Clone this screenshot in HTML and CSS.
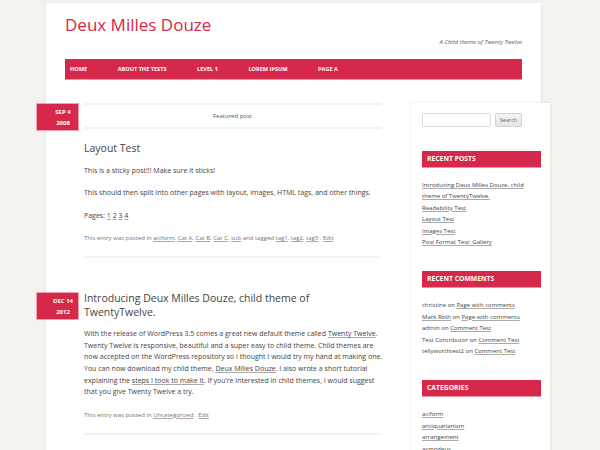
FILE: index.html
```html
<!DOCTYPE html>
<html lang="en">
<head>
<meta charset="utf-8">
<title>Deux Milles Douze</title>
<link rel="stylesheet" href="styles.css">
</head>
<body>
<div class="page">
  <header class="site-header">
    <h1 class="site-title">Deux Milles Douze</h1>
    <p class="site-desc">A Child theme of Twenty Twelve</p>
    <nav class="main-nav">
      <ul>
        <li>Home</li>
        <li>About The Tests</li>
        <li>Level 1</li>
        <li>Lorem Ipsum</li>
        <li>Page A</li>
      </ul>
    </nav>
  </header>
  <div class="site-main">
    <main class="content">
      <article class="post">
        <div class="date-badge"><span>Sep 4</span><span>2008</span></div>
        <div class="featured">Featured post</div>
        <h2 class="entry-title">Layout Test</h2>
        <div class="entry-content">
          <p>This is a sticky post!!! Make sure it sticks!</p>
          <p>This should then split into other pages with layout, images, HTML tags, and other things.</p>
          <p>Pages: <a href="#">1</a> <a href="#">2</a> <a href="#">3</a> <a href="#">4</a></p>
        </div>
        <footer class="entry-meta">This entry was posted in <a href="#">aciform</a>, <a href="#">Cat A</a>, <a href="#">Cat B</a>, <a href="#">Cat C</a>, <a href="#">sub</a> and tagged <a href="#">tag1</a>, <a href="#">tag2</a>, <a href="#">tag3</a> . <a href="#">Edit</a></footer>
      </article>
      <article class="post">
        <div class="date-badge"><span>Dec 14</span><span>2012</span></div>
        <h2 class="entry-title first">Introducing Deux Milles Douze, child theme of TwentyTwelve.</h2>
        <div class="entry-content">
          <p>With the release of WordPress 3.5 comes a great new default theme called <a href="#">Twenty Twelve</a>. Twenty Twelve is responsive, beautiful and a super easy to child theme. Child themes are now accepted on the WordPress repository so I thought I would try my hand at making one. You can now download my child theme, <a href="#">Deux Milles Douze</a>. I also wrote a short tutorial explaining the <a href="#">steps I took to make it</a>. If you’re interested in child themes, I would suggest that you give Twenty Twelve a try.</p>
        </div>
        <footer class="entry-meta">This entry was posted in <a href="#">Uncategorized</a> . <a href="#">Edit</a></footer>
      </article>
    </main>
    <aside class="sidebar">
      <form class="search">
        <input type="text" class="search-input">
        <button type="button" class="search-btn">Search</button>
      </form>
      <section class="widget">
        <h3 class="widget-title">Recent Posts</h3>
        <ul class="widget-list">
          <li><a href="#">Introducing Deux Milles Douze, child theme of TwentyTwelve.</a></li>
          <li><a href="#">Readability Test</a></li>
          <li><a href="#">Layout Test</a></li>
          <li><a href="#">Images Test</a></li>
          <li><a href="#">Post Format Test: Gallery</a></li>
        </ul>
      </section>
      <section class="widget">
        <h3 class="widget-title">Recent Comments</h3>
        <ul class="widget-list">
          <li>christine on <a href="#">Page with comments</a></li>
          <li><a href="#">Mark Roth</a> on <a href="#">Page with comments</a></li>
          <li>admin on <a href="#">Comment Test</a></li>
          <li>Test Contributor on <a href="#">Comment Test</a></li>
          <li>tellyworthtest2 on <a href="#">Comment Test</a></li>
        </ul>
      </section>
      <section class="widget">
        <h3 class="widget-title">Categories</h3>
        <ul class="widget-list">
          <li><a href="#">aciform</a></li>
          <li><a href="#">antiquarianism</a></li>
          <li><a href="#">arrangement</a></li>
          <li><a href="#">asmodeus</a></li>
        </ul>
      </section>
    </aside>
  </div>
</div>
</body>
</html>
```
FILE: styles.css
```css
html, body {
  margin: 0;
  height: 450px;
  overflow: hidden;
}
body {
  background: #f3f2ee;
  font-family: "Open Sans", "DejaVu Sans", sans-serif;
  color: #444;
}
a {
  color: #444;
  text-decoration: underline;
  text-decoration-color: #aaa;
}
.page {
  width: 495px;
  min-height: 470px;
  margin: 3px 0 0 46px;
  background: #fff;
  box-shadow: 0 1px 3px rgba(0, 0, 0, 0.08);
}
.site-header {
  padding: 10px 19px 0;
}
.site-title {
  margin: 0;
  font-size: 17px;
  line-height: 24px;
  font-weight: 400;
  color: #d6284a;
}
.site-desc {
  margin: 0;
  font-size: 6px;
  line-height: 10px;
  font-style: italic;
  text-align: right;
  color: #5e5e5e;
}
.main-nav {
  margin-top: 12px;
  height: 21px;
  box-sizing: border-box;
  background: #d6284a;
  border-bottom: 1px solid #ee93a5;
}
.main-nav ul {
  list-style: none;
  margin: 0;
  padding: 0 0 0 5px;
  height: 100%;
  display: flex;
  align-items: center;
  gap: 30.5px;
}
.main-nav li {
  font-size: 5.6px;
  font-weight: 700;
  color: #fff;
  text-transform: uppercase;
}
.site-main {
  display: flex;
  align-items: flex-start;
  margin-top: 23px;
}
.content {
  flex-shrink: 0;
  width: 303px;
  margin-left: 38px;
}
.post {
  position: relative;
}
.post + .post {
  margin-top: 34px;
}
.date-badge {
  position: absolute;
  left: -48px;
  top: 0;
  width: 43px;
  height: 28px;
  box-sizing: border-box;
  padding: 3px 0 0 11px;
  background: #d6284a;
  border: 1px solid #f0a2b1;
  display: flex;
  flex-direction: column;
  align-items: center;
  color: #fff;
  font-size: 6px;
  font-weight: 700;
  line-height: 10.6px;
  text-transform: uppercase;
}
.featured {
  width: 297px;
  height: 26px;
  box-sizing: border-box;
  border-top: 2px solid #f3f3f3;
  border-bottom: 2px solid #f3f3f3;
  text-align: center;
  font-size: 6px;
  line-height: 22px;
  color: #555;
}
.entry-title {
  max-width: 290px;
  margin: 13px 0 9px;
  font-size: 10.5px;
  line-height: 13.5px;
  font-weight: 400;
  color: #444;
}
.entry-title.first {
  margin-top: 0;
}
.entry-content p {
  margin: 0 0 11px;
  font-size: 7px;
  line-height: 11.6px;
}
.entry-meta {
  width: 297px;
  padding-bottom: 11px;
  border-bottom: 2px solid #f3f3f3;
  font-size: 6px;
  line-height: 13px;
  color: #757575;
}
.entry-meta a {
  color: #757575;
}
.sidebar {
  flex-shrink: 0;
  width: 139px;
  min-height: 360px;
  margin-left: 24px;
  box-sizing: border-box;
  padding: 10px 9px 20px 11px;
  background: #fff;
  box-shadow: 0 0 3px rgba(0, 0, 0, 0.1);
}
.search {
  display: flex;
  gap: 4px;
  margin: 0;
}
.search-input {
  width: 69px;
  height: 14px;
  box-sizing: border-box;
  margin: 0;
  border: 1px solid #ddd;
  border-radius: 2px;
  background: #fff;
}
.search-btn {
  width: 27px;
  height: 14px;
  box-sizing: border-box;
  margin: 0;
  padding: 0;
  border: 1px solid #d2d2d2;
  border-radius: 2px;
  background: linear-gradient(#f4f4f4, #e6e6e6);
  font-family: "Open Sans", sans-serif;
  font-size: 5.5px;
  color: #666;
}
.widget-title {
  margin: 24px 0 12px;
  height: 17px;
  box-sizing: border-box;
  padding-left: 5px;
  background: #d6284a;
  border-bottom: 1px solid #ee93a5;
  color: #fff;
  font-size: 6.8px;
  font-weight: 700;
  line-height: 16px;
  text-transform: uppercase;
}
.widget + .widget .widget-title {
  margin-top: 23px;
}
.widget-list {
  list-style: none;
  margin: 0;
  padding: 0;
  font-size: 6px;
  line-height: 11.4px;
  color: #444;
}
```
